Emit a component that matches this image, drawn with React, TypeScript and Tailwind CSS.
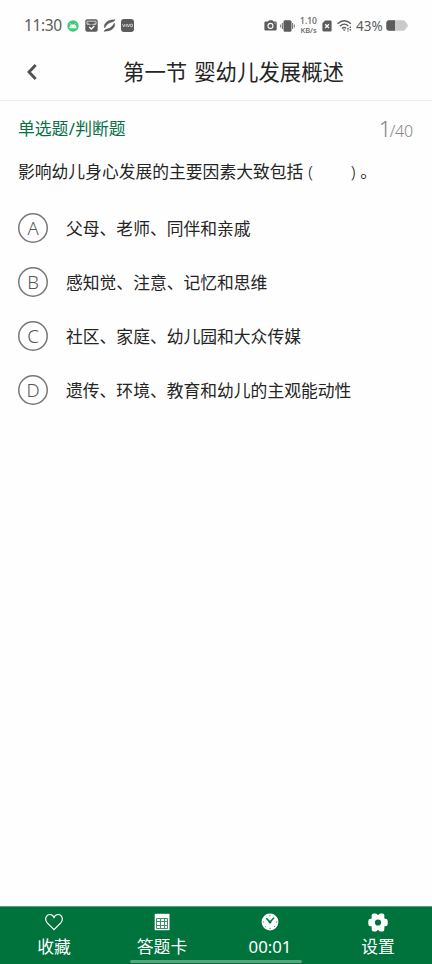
import React from "react";

const options = [
  { key: "A", text: "父母、老师、同伴和亲戚" },
  { key: "B", text: "感知觉、注意、记忆和思维" },
  { key: "C", text: "社区、家庭、幼儿园和大众传媒" },
  { key: "D", text: "遗传、环境、教育和幼儿的主观能动性" },
];

function StatusBar() {
  return (
    <div className="flex h-[51px] items-center pl-6 pr-[24px] text-[#5c5c5c]">
      <span className="w-[43px] whitespace-nowrap pb-[2px] text-[15.500px] leading-5 tracking-[-0.4px]">11:30</span>
      <svg className="h-3 w-3" viewBox="0 0 12 12">
        <circle cx="6" cy="6" r="5.7" fill="#3ccb78" />
        <path d="M2.7 8a3.3 3.3 0 0 1 6.6 0zM3.4 3.3l1 1.600M8.600 3.300l-1 1.600" fill="#fff" stroke="#fff" strokeWidth=".6" />
        <circle cx="4.6" cy="6.7" r=".4" fill="#3ccb78" />
        <circle cx="7.4" cy="6.7" r=".4" fill="#3ccb78" />
      </svg>
      <svg className="ml-1.5 h-[13px] w-[13px]" viewBox="0 0 13 13">
        <rect x=".3" y=".3" width="12.4" height="12.4" rx="2" fill="currentColor" />
        <path d="M2 2.200h9M2 2.200v3M11 2.200v3" fill="none" stroke="#ddd" strokeWidth=".9" />
        <path d="M2 4.500h2.200c.3 1.200 4.300 1.200 4.600 0H11v1.200H2z" fill="#ddd" />
        <path d="M4.200 8l2.100 2 3-3" fill="none" stroke="#fff" strokeWidth="1.300" />
      </svg>
      <svg className="ml-[5px] h-[13px] w-[13px]" viewBox="0 0 13 13">
        <path d="M1.700 8.800C.4 6 3 2.800 6 1.700 8 1 9.800 1 12 .7 11 2.300 10 2.800 8.600 3 5.500 3.600 3.200 6 1.700 8.800z" fill="currentColor" stroke="currentColor" strokeWidth=".6" />
        <path d="M11.300 4.200c1.300 2.800-1.300 6-4.300 7.100-2 .7-3.800.7-6 1 1-1.600 2-2.100 3.400-2.300 3.100-.6 5.400-3 6.900-5.800z" fill="currentColor" stroke="currentColor" strokeWidth=".6" />
      </svg>
      <div className="ml-[5px] flex h-[13px] w-[13px] items-center justify-center rounded-[3px] bg-[#5c5c5c]">
        <svg className="h-[5px] w-[11px]" viewBox="0 0 11 5" fill="none" stroke="#ddd" strokeWidth=".8">
          <path d="M.5 1l1.200 3L3 1M4.200 1v3M5.200 1l1.200 3 1.200-3" />
          <rect x="8.300" y="1.200" width="2.200" height="2.500" rx=".5" />
        </svg>
      </div>
      <div className="ml-auto flex items-center">
        <svg className="h-[11px] w-[13px]" viewBox="0 0 13 11">
          <path d="M1.500 1.500H4L5 .3h3.500l1 1.200h2q1.200 0 1.200 1.200v6.600q0 1.200-1.200 1.200h-10Q.4 10.500.4 9.300V2.700q0-1.200 1.100-1.200z" fill="currentColor" />
          <circle cx="6.500" cy="5.900" r="2.500" fill="none" stroke="#fff" strokeWidth="1.100" />
          <circle cx="11" cy="3" r=".6" fill="#fff" />
        </svg>
        <svg className="ml-[3px] h-3 w-[15px]" viewBox="0 0 15 12">
          <rect x="3.500" y=".3" width="8" height="11.400" rx="1.500" fill="currentColor" />
          <path d="M.7 4.500v3M2.400 3v6M14.300 4.500v3M12.600 3v6" stroke="currentColor" strokeWidth=".9" />
        </svg>
        <div className="ml-[4px] flex w-[19px] flex-col items-center whitespace-nowrap">
          <span className="text-[8.500px] font-medium leading-[8.500px]">1.10</span>
          <span className="text-[7.500px] font-medium leading-[8px]">KB/s</span>
        </div>
        <svg className="ml-[4px] h-3 w-[10px]" viewBox="0 0 10 12">
          <path d="M3.200.4h5q1.400 0 1.400 1.400v8.400q0 1.400-1.400 1.400H1.800Q.4 11.600.4 10.200V3.300z" fill="currentColor" />
          <path d="M3.200 4.200l3.700 3.800M6.900 4.200L3.200 8" stroke="#fff" strokeWidth="1.300" />
        </svg>
        <svg className="ml-[5px] h-[13px] w-[15px]" viewBox="0 0 15 13" fill="none" stroke="currentColor" strokeWidth="1.400">
          <path d="M.5 4.700q6.700-6 13.400 0M2.800 7.200q4.600-4 8.600-.3M5 9.500q2.100-1.900 4.100-.3" />
          <path d="M5.800 10.600h2.800L7.200 12.200z" fill="currentColor" stroke="none" />
          <path d="M11 9v3.500M13.300 7.500v5" strokeDasharray="1.500 1" />
        </svg>
        <span className="ml-[4px] w-[27px] whitespace-nowrap text-[13.500px] leading-5">43%</span>
        <svg className="ml-[3px] h-[11px] w-[22px]" viewBox="0 0 22 11">
          <rect x=".3" y=".3" width="19.500" height="10.400" rx="3" fill="#cacaca" />
          <path d="M19.500 2q2.300 1.500 2.300 3.500T19.500 9z" fill="#cacaca" />
          <path d="M3.300.3H9v10.400H3.300q-3 0-3-3V3.300q0-3 3-3z" fill="currentColor" />
        </svg>
      </div>
    </div>
  );
}

function HeartIcon() {
  return (
    <svg className="h-[18px] w-[18px]" viewBox="0 0 18 18" fill="none" stroke="#fff" strokeWidth="1.200">
      <path d="M9 16.700L2.200 9.800C-1 6 1.300 1.500 5 1.500c2 0 3.300 1.400 4 2.900.7-1.500 2-2.900 4-2.900 3.700 0 6 4.500 2.800 8.300z" />
    </svg>
  );
}

function CardIcon() {
  return (
    <svg className="h-[18px] w-[18px]" viewBox="0 0 18 18">
      <rect x="1.700" y=".8" width="14.800" height="16.400" fill="#fff" />
      <path d="M3.500 5.500h11v10h-11zM3.500 8.500h11M3.500 12.500h11M7.500 5.500v10M11.500 5.500v10" fill="none" stroke="#3c9168" strokeWidth="1" />
    </svg>
  );
}

function ClockIcon() {
  return (
    <svg className="h-[18px] w-[18px]" viewBox="0 0 18 18" fill="none">
      <circle cx="9" cy="9" r="8.400" fill="#fff" />
      <path d="M5.200 5.200L9 9l4-4.200" stroke="#00733d" strokeWidth="1.500" />
      <circle cx="9" cy="9" r="1.500" fill="#00733d" />
      <path d="M9 1.800v1.400M9 14.800v1.400M1.800 9h1.400M14.800 9h1.400M4 14l.8-.8M14 14l-.8-.8" stroke="#00733d" strokeWidth=".8" />
    </svg>
  );
}

function SettingsIcon() {
  return (
    <svg className="h-[19px] w-5" viewBox="0 0 20 19">
      <g fill="#fff">
        <circle cx="10" cy="9.500" r="7.800" />
        <rect x="3.700" y=".5" width="5.700" height="6" rx="1.800" />
        <rect x="10.600" y=".5" width="5.700" height="6" rx="1.800" />
        <rect x=".3" y="5.800" width="6" height="7.400" rx="2.300" />
        <rect x="13.700" y="5.800" width="6" height="7.400" rx="2.300" />
        <rect x="3.700" y="12.500" width="5.700" height="6" rx="1.800" />
        <rect x="10.600" y="12.500" width="5.700" height="6" rx="1.800" />
      </g>
      <circle cx="10" cy="9.500" r="3.100" fill="#00733d" />
    </svg>
  );
}

const tabs = [
  { label: "收藏", icon: <HeartIcon /> },
  { label: "答题卡", icon: <CardIcon /> },
  { label: "00:01", icon: <ClockIcon /> },
  { label: "设置", icon: <SettingsIcon /> },
];

export default function App() {
  return (
    <div className="flex h-[964px] w-[432px] flex-col overflow-hidden bg-[#fefefe] font-['Noto_Sans','Noto_Sans_CJK_SC',sans-serif] text-[#242424]">
      <StatusBar />
      <header className="flex h-[50px] items-center border-b border-[#ececec] pb-[7px]">
        <svg className="ml-[27px] h-4 w-[10px]" viewBox="0 0 10 16" fill="none" stroke="#505050" strokeWidth="2.800">
          <path d="M8.700 1L2 8l6.700 7" />
        </svg>
        <h1 className="ml-[86px] whitespace-nowrap text-[21.400px] font-normal leading-8 [word-spacing:1.500px]">第一节 婴幼儿发展概述</h1>
      </header>
      <main className="flex-1 px-[18px]">
        <div className="flex h-[55px] items-center justify-between">
          <span className="whitespace-nowrap text-[16.800px] leading-6 text-[#087047]">单选题<span className="mx-[0.300px]">/</span>判断题</span>
          <span className="flex items-baseline pr-[1px] pt-[2px] text-[#858585]">
            <span className="text-[22px] font-light leading-6 tracking-[-1.500px]">1</span>
            <span className="text-[16px] font-light leading-6 tracking-[-0.200px]">/40</span>
          </span>
        </div>
        <p className="flex h-8 items-center whitespace-nowrap text-[16.800px] leading-8">
          <span>影响幼儿身心发展的主要因素大致包括</span>
          <span className="ml-[5px] flex w-[47px] justify-between pb-[1px] font-light"><span>(</span><span>)</span></span>
          <span className="ml-[5px]">。</span>
        </p>
        <ul className="pt-[13px]">
          {options.map((o) => (
            <li key={o.key} className="flex h-[54px] items-center">
              <span className="flex h-[30px] w-[30px] items-center justify-center rounded-full text-[18.500px] font-light leading-none text-[#555] shadow-[inset_0_0_0_1.500px_#777]">{o.key}</span>
              <span className="ml-[18px] whitespace-nowrap pt-[2px] text-[16.800px] leading-6">{o.text}</span>
            </li>
          ))}
        </ul>
      </main>
      <nav className="relative grid h-[58px] grid-cols-4 border-t border-[#5f9f80] bg-[#00733d] text-white">
        {tabs.map((t) => (
          <div key={t.label} className="flex flex-col items-center pt-[6px]">
            <div className="flex h-[18px] items-center">{t.icon}</div>
            <span className="mt-[4px] text-[16.800px] leading-6">{t.label}</span>
          </div>
        ))}
        <div className="absolute bottom-[1px] left-[130px] h-[3px] w-[172px] rounded-full bg-[#58a47e]" />
      </nav>
    </div>
  );
}
